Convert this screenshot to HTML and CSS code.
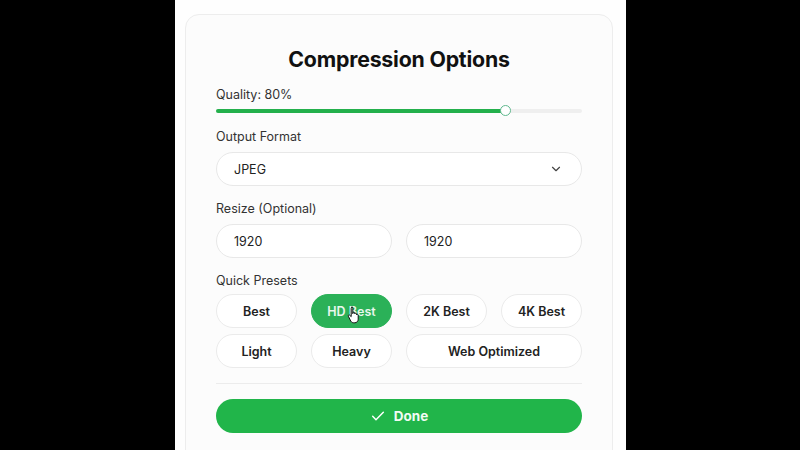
FILE: index.html
```html
<!DOCTYPE html>
<html lang="en">
<head>
  <meta charset="UTF-8">
  <meta name="viewport" content="width=device-width, initial-scale=1.0">
  <title>Compression Options</title>
  <link rel="stylesheet" href="styles.css">
</head>
<body>
  <div class="frame">
    <div class="card">
      <h1>Compression Options</h1>

      <div class="field quality">
        <label>Quality: 80%</label>
        <div class="slider">
          <div class="track"></div>
          <div class="fill" style="width: 79.2%;"></div>
          <div class="thumb" style="left: 79.2%;"></div>
        </div>
      </div>

      <div class="field">
        <label>Output Format</label>
        <div class="select">
          <span>JPEG</span>
          <svg width="14" height="14" viewBox="0 0 24 24" fill="none" stroke="#444" stroke-width="2" stroke-linecap="round" stroke-linejoin="round"><path d="M6 9l6 6 6-6"/></svg>
        </div>
      </div>

      <div class="field">
        <label>Resize (Optional)</label>
        <div class="resize-row">
          <div class="input">1920</div>
          <div class="input">1920</div>
        </div>
      </div>

      <div class="field">
        <label>Quick Presets</label>
        <div class="presets">
          <button class="preset">Best</button>
          <button class="preset active">HD Best
            <svg class="cursor" width="14" height="18" viewBox="0 0 14 18"><path d="M4.5 1.2c.8 0 1.3.6 1.3 1.3v5.2l.1-.9c.2-.7 1.6-.7 1.8.1v.9c.2-.8 1.6-.8 1.8 0v1c.3-.7 1.6-.6 1.7.2v4.2c0 1.8-1.3 3.6-3.4 3.6H6.6c-1.2 0-2.1-.6-2.8-1.6L1.4 10.3c-.5-.8.5-1.8 1.3-1.1l1.5 1.4V2.5c0-.7.5-1.3 1.3-1.3z" fill="#fff" stroke="#111" stroke-width="1" stroke-linejoin="round"/></svg>
          </button>
          <button class="preset">2K Best</button>
          <button class="preset">4K Best</button>
          <button class="preset">Light</button>
          <button class="preset">Heavy</button>
          <button class="preset wide">Web Optimized</button>
        </div>
      </div>

      <hr class="divider">

      <button class="done">
        <svg width="16" height="16" viewBox="0 0 24 24" fill="none" stroke="#fff" stroke-width="2.2" stroke-linecap="round" stroke-linejoin="round"><path d="M4 12.5l5 5L20 6.5"/></svg>
        Done
      </button>
    </div>
  </div>
</body>
</html>
```

FILE: styles.css
```css
html, body {
  height: 100%;
}

body {
  margin: 0;
  background: #000;
  font-family: Inter, "Noto Sans", sans-serif;
  color: #222;
  overflow: hidden;
}

.frame {
  width: 451px;
  height: 100%;
  margin: 0 auto 0 175px;
  background: #fefefe;
  padding: 14px 13px 0 10px;
  box-sizing: border-box;
}

.card {
  border: 1px solid #ededed;
  border-radius: 14px;
  background: #fcfcfc;
  padding: 30px 30px 40px;
  display: flex;
  flex-direction: column;
  gap: 15px;
}

h1 {
  margin: 0 0 -1px;
  font-size: 21.3px;
  line-height: 28px;
  font-weight: 700;
  text-align: center;
  color: #111;
  letter-spacing: -0.2px;
}

.field {
  display: flex;
  flex-direction: column;
  gap: 7px;
}

.field label {
  font-size: 12.5px;
  line-height: 16px;
  color: #333;
}

.quality {
  gap: 0;
  margin-bottom: -5px;
}

.slider {
  position: relative;
  height: 16px;
}

.slider .track,
.slider .fill {
  position: absolute;
  left: 0;
  top: 6px;
  height: 4px;
  border-radius: 2px;
}

.slider .track {
  width: 100%;
  background: #efefef;
}

.slider .fill {
  background: #24b04c;
}

.slider .thumb {
  position: absolute;
  top: 2px;
  width: 9px;
  height: 9px;
  margin-left: -6px;
  border: 1.5px solid #5fb88e;
  border-radius: 50%;
  background: #fff;
}

.select,
.input {
  height: 34px;
  border: 1px solid #e8e8e8;
  border-radius: 17px;
  background: #fff;
  box-sizing: border-box;
  font-size: 12.5px;
  display: flex;
  align-items: center;
  padding: 0 17px;
}

.select {
  justify-content: space-between;
  padding-right: 18px;
}

.resize-row {
  display: grid;
  grid-template-columns: 1fr 1fr;
  gap: 14px;
}

.presets {
  display: grid;
  grid-template-columns: repeat(4, 1fr);
  gap: 6px 14px;
  margin-top: -2px;
}

.preset {
  position: relative;
  height: 34px;
  border: 1px solid #ebebeb;
  border-radius: 17px;
  background: #fff;
  font-family: inherit;
  font-size: 12.5px;
  font-weight: 600;
  color: #222;
  padding: 0;
  cursor: pointer;
}

.preset.wide {
  grid-column: span 2;
}

.preset.active {
  background: #2bb158;
  border-color: #2bb158;
  color: #e9f7ee;
}

.cursor {
  position: absolute;
  left: 35px;
  top: 11px;
}

.divider {
  margin: 0;
  border: none;
  border-top: 1px solid #ececec;
}

.done {
  height: 34px;
  border: none;
  border-radius: 17px;
  background: #21b54a;
  color: #f2fbf4;
  font-family: inherit;
  font-size: 13.5px;
  font-weight: 700;
  display: flex;
  align-items: center;
  justify-content: center;
  gap: 8px;
  cursor: pointer;
}
```
